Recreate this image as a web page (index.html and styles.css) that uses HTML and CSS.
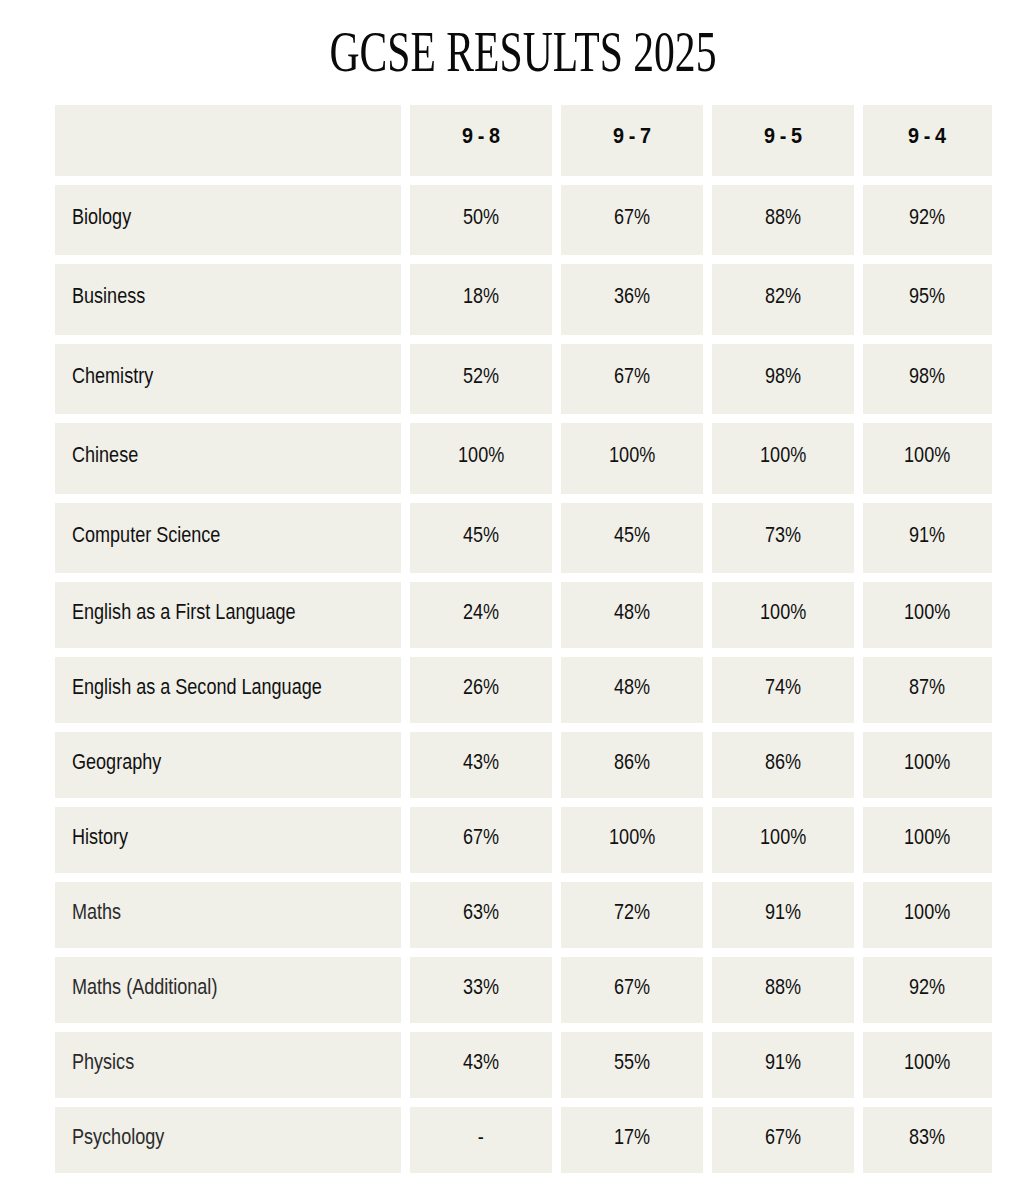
FILE: index.html
```html
<!DOCTYPE html>
<html lang="en">
<head>
<meta charset="utf-8">
<title>GCSE Results 2025</title>
<link rel="stylesheet" href="styles.css">
</head>
<body>
<main class="page">
  <h1 class="title"><span class="title-text">GCSE RESULTS 2025</span></h1>
  <div class="results">
    <div class="cell head label"></div>
    <div class="cell head"><span>9 - 8</span></div>
    <div class="cell head"><span>9 - 7</span></div>
    <div class="cell head"><span>9 - 5</span></div>
    <div class="cell head"><span>9 - 4</span></div>

    <div class="cell label"><span>Biology</span></div><div class="cell"><span>50%</span></div><div class="cell"><span>67%</span></div><div class="cell"><span>88%</span></div><div class="cell"><span>92%</span></div>
    <div class="cell label"><span>Business</span></div><div class="cell"><span>18%</span></div><div class="cell"><span>36%</span></div><div class="cell"><span>82%</span></div><div class="cell"><span>95%</span></div>
    <div class="cell label"><span>Chemistry</span></div><div class="cell"><span>52%</span></div><div class="cell"><span>67%</span></div><div class="cell"><span>98%</span></div><div class="cell"><span>98%</span></div>
    <div class="cell label"><span>Chinese</span></div><div class="cell"><span>100%</span></div><div class="cell"><span>100%</span></div><div class="cell"><span>100%</span></div><div class="cell"><span>100%</span></div>
    <div class="cell label"><span>Computer Science</span></div><div class="cell"><span>45%</span></div><div class="cell"><span>45%</span></div><div class="cell"><span>73%</span></div><div class="cell"><span>91%</span></div>
    <div class="cell label"><span>English as a First Language</span></div><div class="cell"><span>24%</span></div><div class="cell"><span>48%</span></div><div class="cell"><span>100%</span></div><div class="cell"><span>100%</span></div>
    <div class="cell label"><span>English as a Second Language</span></div><div class="cell"><span>26%</span></div><div class="cell"><span>48%</span></div><div class="cell"><span>74%</span></div><div class="cell"><span>87%</span></div>
    <div class="cell label"><span>Geography</span></div><div class="cell"><span>43%</span></div><div class="cell"><span>86%</span></div><div class="cell"><span>86%</span></div><div class="cell"><span>100%</span></div>
    <div class="cell label"><span>History</span></div><div class="cell"><span>67%</span></div><div class="cell"><span>100%</span></div><div class="cell"><span>100%</span></div><div class="cell"><span>100%</span></div>
    <div class="cell label soft"><span>Maths</span></div><div class="cell"><span>63%</span></div><div class="cell"><span>72%</span></div><div class="cell"><span>91%</span></div><div class="cell"><span>100%</span></div>
    <div class="cell label soft"><span>Maths (Additional)</span></div><div class="cell"><span>33%</span></div><div class="cell"><span>67%</span></div><div class="cell"><span>88%</span></div><div class="cell"><span>92%</span></div>
    <div class="cell label soft"><span>Physics</span></div><div class="cell"><span>43%</span></div><div class="cell"><span>55%</span></div><div class="cell"><span>91%</span></div><div class="cell"><span>100%</span></div>
    <div class="cell label soft"><span>Psychology</span></div><div class="cell"><span>-</span></div><div class="cell"><span>17%</span></div><div class="cell"><span>67%</span></div><div class="cell"><span>83%</span></div>
  </div>
</main>
</body>
</html>
```

FILE: styles.css
```css
html, body {
  margin: 0;
  padding: 0;
  background: #ffffff;
}

.page {
  width: 937px;
  margin: 0 0 0 55px;
  padding-top: 20px;
}

.title {
  margin: 0;
  height: 85px;
  display: flex;
  justify-content: center;
  align-items: flex-start;
  font-family: "Liberation Serif", "Times New Roman", serif;
  font-weight: 400;
  font-size: 57px;
  line-height: 64px;
  color: #0a0a0a;
  letter-spacing: 0;
}

.title-text {
  display: inline-block;
  transform: scaleX(0.73);
  transform-origin: center;
  white-space: nowrap;
}

.results {
  display: grid;
  grid-template-columns: 346px 142px 142px 142px 129px;
  grid-template-rows: 71px 70px 71px 70px 71px 70px repeat(8, 66px);
  gap: 9px;
  font-family: "Liberation Sans", Arial, sans-serif;
  font-size: 22px;
  line-height: 24px;
  color: #111111;
}

.cell {
  background: #f0efe8;
  display: flex;
  align-items: center;
  justify-content: center;
  white-space: nowrap;
  padding-bottom: 7px;
  box-sizing: border-box;
}

.cell span {
  display: inline-block;
  transform: scaleX(0.82);
  transform-origin: center;
}

.label {
  justify-content: flex-start;
  padding-left: 17px;
}

.label span {
  transform-origin: left center;
}

.head {
  font-weight: 700;
  color: #0a0a0a;
  padding-bottom: 9px;
}

.head span {
  transform: scaleX(0.9);
  word-spacing: -1px;
}

.soft {
  color: #2b2b2b;
}
```
